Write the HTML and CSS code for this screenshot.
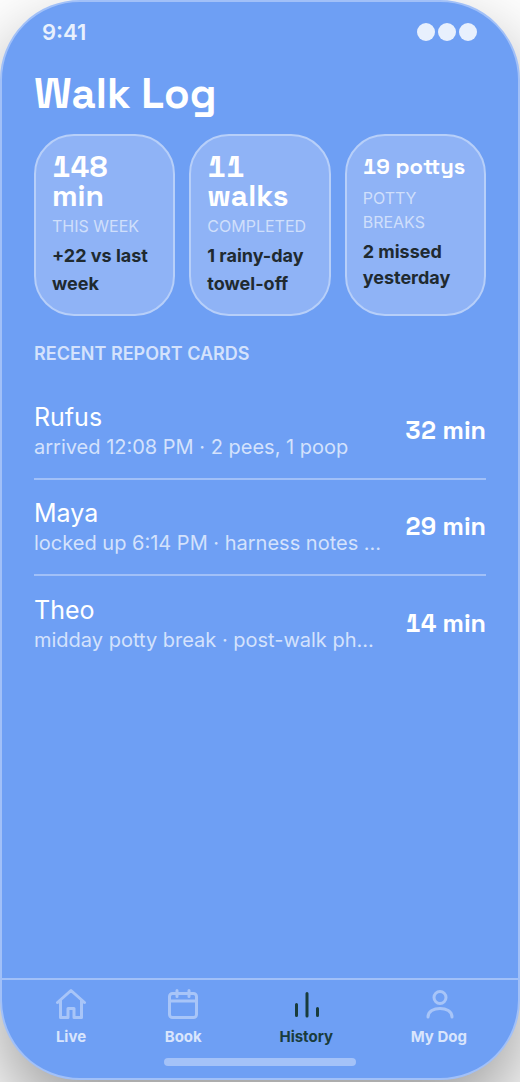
FILE: index.html
```html
<!DOCTYPE html>
<html lang="en">
<head>
<meta charset="utf-8">
<meta name="viewport" content="width=device-width, initial-scale=1">
<title>Walk Log</title>
<link rel="stylesheet" href="styles.css">
</head>
<body>
<div class="phone">
  <header class="status">
    <span class="time">9:41</span>
    <span class="dots"><i class="dot"></i><i class="dot"></i><i class="dot"></i></span>
  </header>
  <main class="content">
    <h1 class="title">Walk Log</h1>
    <section class="stats">
      <article class="card">
        <strong class="value">148 min</strong>
        <span class="label">THIS WEEK</span>
        <span class="note">+22 vs last week</span>
      </article>
      <article class="card">
        <strong class="value">11 walks</strong>
        <span class="label">COMPLETED</span>
        <span class="note">1 rainy-day towel-off</span>
      </article>
      <article class="card compact">
        <strong class="value">19 pottys</strong>
        <span class="label">POTTY BREAKS</span>
        <span class="note">2 missed yesterday</span>
      </article>
    </section>
    <h2 class="subtitle">RECENT REPORT CARDS</h2>
    <ul class="reports">
      <li class="report">
        <div class="info"><span class="name">Rufus</span><span class="detail">arrived 12:08 PM · 2 pees, 1 poop</span></div>
        <strong class="duration">32 min</strong>
      </li>
      <li class="report">
        <div class="info"><span class="name">Maya</span><span class="detail">locked up 6:14 PM · harness notes …</span></div>
        <strong class="duration">29 min</strong>
      </li>
      <li class="report">
        <div class="info"><span class="name">Theo</span><span class="detail">midday potty break · post-walk ph…</span></div>
        <strong class="duration">14 min</strong>
      </li>
    </ul>
  </main>
  <nav class="tabs">
    <a class="tab" href="#live">
      <svg class="icon" viewBox="0 0 32 32"><path d="M2.500 14.500 16 2.500 29.500 14.500M5.500 12.500V29.500h7.500V20.500h6V29.500h7.500V12.500"/></svg>
      <span>Live</span>
    </a>
    <a class="tab" href="#book">
      <svg class="icon" viewBox="0 0 32 32"><rect x="2.500" y="5.500" width="27" height="24" rx="3"/><path d="M2.500 13h27M10 2.500v6M22 2.500v6"/></svg>
      <span>Book</span>
    </a>
    <a class="tab active" href="#history" aria-current="page">
      <svg class="icon" viewBox="0 0 32 32"><path d="M6.500 16.500v11M17 5.500v22.500M27.500 20.500v7"/></svg>
      <span>History</span>
    </a>
    <a class="tab" href="#dog">
      <svg class="icon" viewBox="0 0 32 32"><circle cx="17" cy="9.500" r="6"/><path d="M5 29C5 17.500 29 17.500 29 29"/></svg>
      <span>My Dog</span>
    </a>
  </nav>
  <div class="home"></div>
</div>
</body>
</html>
```
FILE: styles.css
```css
* { box-sizing: border-box; }
body {
  margin: 0;
  background: #fff;
  font-family: Inter, sans-serif;
  color: #fff;
}
.phone {
  display: flex;
  flex-direction: column;
  min-height: calc(100vh - 2px);
  margin-bottom: 2px;
  border: 2px solid #a1c0f8;
  border-radius: 80px;
  background: #6e9ff4;
  box-shadow: 0 36px 80px rgba(0, 0, 0, 0.4);
}
.status {
  display: flex;
  justify-content: space-between;
  align-items: center;
  padding: 16px 41px 0 40px;
  line-height: 28px;
  color: #e8f0fd;
}
.time { font-size: 22px; font-weight: 600; }
.dots { display: flex; gap: 3px; }
.dot { width: 18px; height: 18px; border-radius: 50%; background: #e8f0fd; }
.content { flex: 1; padding: 20px 32px; }
.title {
  margin: 0 0 12px;
  font-family: "Space Grotesk", Inter, sans-serif;
  font-size: 42px;
  font-weight: 600;
  line-height: 56px;
}
.stats { display: grid; grid-template-columns: repeat(3, 1fr); gap: 14px; }
.card {
  display: flex;
  flex-direction: column;
  min-height: 182px;
  padding: 16px 0 16px 16px;
  border: 2px solid #b7cff9;
  border-radius: 40px;
  background: #8fb3f6;
}
.value {
  padding-right: 16px;
  font-family: "Space Grotesk", Inter, sans-serif;
  font-size: 30px;
  font-weight: 700;
  line-height: 29px;
  font-variant-numeric: tabular-nums;
}
.label { margin-top: 4px; font-size: 16px; line-height: 24px; color: #cfdffb; }
.note { margin-top: 4px; font-size: 18px; font-weight: 700; line-height: 28px; color: #202a30; }
.compact .value { font-size: 22px; }
.compact .label { margin-top: 5px; padding-right: 40px; }
.compact .note { margin-top: 5px; line-height: 26px; }
.subtitle {
  margin: 24px 0 16px;
  font-size: 18px;
  font-weight: 600;
  line-height: 28px;
  color: #d4e2fc;
}
.reports { margin: 0; padding: 0; list-style: none; }
.report {
  display: flex;
  justify-content: space-between;
  align-items: center;
  min-height: 96px;
  border-bottom: 2px solid #a1c0f8;
}
.report:last-child { border-bottom: 0; }
.info { display: flex; flex-direction: column; }
.name { font-size: 25px; line-height: 32px; }
.detail { font-size: 20px; line-height: 28px; color: #d4e2fc; }
.duration {
  font-family: "Space Grotesk", Inter, sans-serif;
  font-size: 25px;
  font-weight: 700;
  line-height: 32px;
  padding-bottom: 3px;
  font-variant-numeric: tabular-nums;
  white-space: nowrap;
}
.tabs {
  display: flex;
  justify-content: space-between;
  padding: 8px 51px 9px 53px;
  border-top: 2px solid #a1c0f8;
}
.tab {
  display: flex;
  flex-direction: column;
  align-items: center;
  gap: 5px;
  color: #d9e5fc;
  font-size: 15px;
  font-weight: 700;
  line-height: 24px;
  text-decoration: none;
}
.icon {
  width: 32px;
  height: 32px;
  fill: none;
  stroke: #a8c5f8;
  stroke-width: 3;
  stroke-linecap: round;
  stroke-linejoin: round;
}
.active { color: #193c3c; }
.active .icon { stroke: #193c3c; }
.home {
  align-self: center;
  width: 192px;
  height: 8px;
  margin-bottom: 12px;
  border-radius: 4px;
  background: #a4c2f8;
}
```
